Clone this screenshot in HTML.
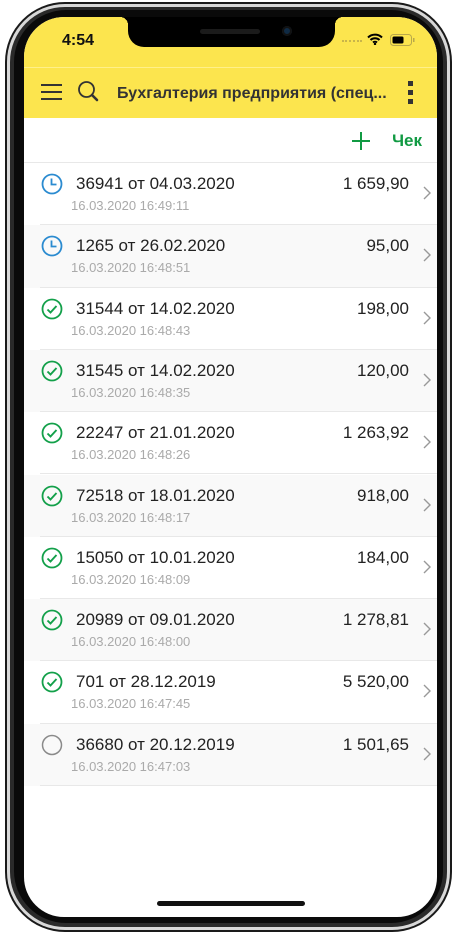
<!DOCTYPE html>
<html><head><meta charset="utf-8"><style>
*{margin:0;padding:0;box-sizing:border-box}
body{width:457px;height:935px;background:#fff;position:relative;overflow:hidden;font-family:"Liberation Sans",Roboto,"DejaVu Sans",sans-serif}
.o1{position:absolute;left:5px;top:2px;width:447px;height:930px;border-radius:60px;background:#1a1a1a}
.o2{position:absolute;left:7px;top:4px;width:443px;height:926px;border-radius:58px;background:#d8d8d8}
.o3{position:absolute;left:10px;top:7px;width:437px;height:920px;border-radius:55px;background:#2a2a2a}
.o4{position:absolute;left:14px;top:10px;width:429px;height:913px;border-radius:52px;background:#0a0a0a}
.scr{position:absolute;left:24px;top:17px;width:413px;height:900px;border-radius:40px;background:#fff;overflow:hidden}
.yel{position:absolute;left:0;top:0;width:413px;height:101px;background:#fce54e}
.notch{position:absolute;left:104px;top:0;width:207px;height:30px;background:#000;border-radius:0 0 16px 16px}
.notch:before{content:"";position:absolute;left:-8px;top:0;width:8px;height:8px;background:radial-gradient(circle at 0 100%,transparent 8px,#000 8px)}
.notch:after{content:"";position:absolute;right:-8px;top:0;width:8px;height:8px;background:radial-gradient(circle at 100% 100%,transparent 8px,#000 8px)}
.time{position:absolute;left:38px;top:15px;font-size:16px;font-weight:bold;color:#111}
.title{position:absolute;left:93px;top:68px;font-size:16px;font-weight:bold;color:#333}
.tb{position:absolute;left:0;top:101px;width:413px;height:45px;border-bottom:1px solid #e8e8e8}
.chek{position:absolute;right:15px;top:13px;font-size:17px;font-weight:bold;color:#119a43}
.row{position:absolute;left:0;width:413px;height:62.3px}
.row.g{background:#f9f9f9}
.row .ln{position:absolute;left:16px;right:0;bottom:0;height:1px;background:#e8e8e8}
.row .t{position:absolute;left:52px;top:11px;font-size:17px;color:#222}
.row .s{position:absolute;left:47px;top:35px;font-size:13px;color:#aaa}
.row .a{position:absolute;right:28px;top:11px;font-size:17px;color:#222}
.row svg.ic{position:absolute;left:17px;top:10px}
.row svg.ch{position:absolute;left:398px;top:22px}
</style></head><body>
<div class="o1"></div><div class="o2"></div><div class="o3"></div><div class="o4"></div>
<div class="scr">
 <div class="yel"></div>
 <div style="position:absolute;left:0;top:50px;width:413px;height:1px;background:#fff08a"></div>
 <div class="notch"><div style="position:absolute;left:72px;top:12px;width:60px;height:5px;border-radius:3px;background:#1b1b1b"></div><div style="position:absolute;left:154px;top:9px;width:10px;height:10px;border-radius:50%;background:#0f2a44;box-shadow:inset 0 0 0 2px #111"></div></div>
 <div class="time">4:54</div>
 <div style="position:absolute;left:318px;top:23px;width:20px;height:2px;border-top:2px dotted #c9b54a"></div>
 <svg style="position:absolute;left:343px;top:16px" width="16" height="12" viewBox="0 0 16 12"><path d="M1 4.5a10 10 0 0 1 14 0M3.5 7a6.5 6.5 0 0 1 9 0M6 9.5a3 3 0 0 1 4 0" stroke="#000" stroke-width="2" fill="none"/><circle cx="8" cy="11" r="1.2"/></svg>
 <svg style="position:absolute;left:366px;top:17px" width="26" height="12" viewBox="0 0 26 12"><rect x="0.5" y="0.5" width="21" height="11" rx="3" fill="none" stroke="#b9a84a"/><rect x="2.5" y="2.5" width="11" height="7" rx="1.5" fill="#000"/><rect x="23" y="4" width="1.5" height="4" fill="#b9a84a"/></svg>
 <svg style="position:absolute;left:16px;top:66px" width="24" height="18"><path d="M1 2h21M1 9h21M1 16h21" stroke="#333" stroke-width="2"/></svg>
 <svg style="position:absolute;left:53px;top:63px" width="24" height="24"><circle cx="9.5" cy="9.5" r="7.5" stroke="#333" stroke-width="1.8" fill="none"/><path d="M15 15l5 5" stroke="#333" stroke-width="2.6" stroke-linecap="round"/></svg>
 <div class="title">Бухгалтерия предприятия (спец...</div>
 <svg style="position:absolute;left:383px;top:63px" width="8" height="26"><rect x="1" y="1" width="5" height="5" fill="#333"/><rect x="1" y="10" width="5" height="5" fill="#333"/><rect x="1" y="19" width="5" height="5" fill="#333"/></svg>
 <div class="tb">
  <svg style="position:absolute;left:328px;top:14px" width="18" height="18"><path d="M9 0v18M0 9h18" stroke="#119a43" stroke-width="2"/></svg>
  <div class="chek">Чек</div>
 </div>
 <div id="list" style="position:absolute;left:0;top:146px"></div>
 <div style="position:absolute;left:133px;top:884px;width:148px;height:5px;border-radius:3px;background:#111"></div>
</div>
<script>
var d=[["c","36941 от 04.03.2020","1 659,90","16.03.2020 16:49:11"],["c","1265 от 26.02.2020","95,00","16.03.2020 16:48:51"],["k","31544 от 14.02.2020","198,00","16.03.2020 16:48:43"],["k","31545 от 14.02.2020","120,00","16.03.2020 16:48:35"],["k","22247 от 21.01.2020","1 263,92","16.03.2020 16:48:26"],["k","72518 от 18.01.2020","918,00","16.03.2020 16:48:17"],["k","15050 от 10.01.2020","184,00","16.03.2020 16:48:09"],["k","20989 от 09.01.2020","1 278,81","16.03.2020 16:48:00"],["k","701 от 28.12.2019","5 520,00","16.03.2020 16:47:45"],["o","36680 от 20.12.2019","1 501,65","16.03.2020 16:47:03"]];
var h="";
d.forEach(function(r,i){
 var ic;
 if(r[0]=="c")ic='<circle cx="11" cy="11" r="9.5" stroke="#2b8bd0" stroke-width="1.8" fill="none"/><path d="M10.5 5.5v6h5" stroke="#2b8bd0" stroke-width="1.8" fill="none"/>';
 else if(r[0]=="k")ic='<circle cx="11" cy="11" r="9.5" stroke="#13a04a" stroke-width="1.8" fill="none"/><path d="M6.5 11.5l3 3 6-6.5" stroke="#13a04a" stroke-width="1.9" fill="none"/>';
 else ic='<circle cx="11" cy="11" r="9.5" stroke="#8a8a8a" stroke-width="1.5" fill="none"/>';
 h+='<div class="row'+(i%2?' g':'')+'" style="top:'+(i*62.3)+'px"><svg class="ic" width="22" height="22">'+ic+'</svg><div class="t">'+r[1]+'</div><div class="a">'+r[2]+'</div><div class="s">'+r[3]+'</div><svg class="ch" width="10" height="16"><path d="M2 2l6 6-6 6" stroke="#999" stroke-width="1.4" fill="none"/></svg><div class="ln"></div></div>';
});
document.getElementById("list").innerHTML=h;
</script>
</body></html>
